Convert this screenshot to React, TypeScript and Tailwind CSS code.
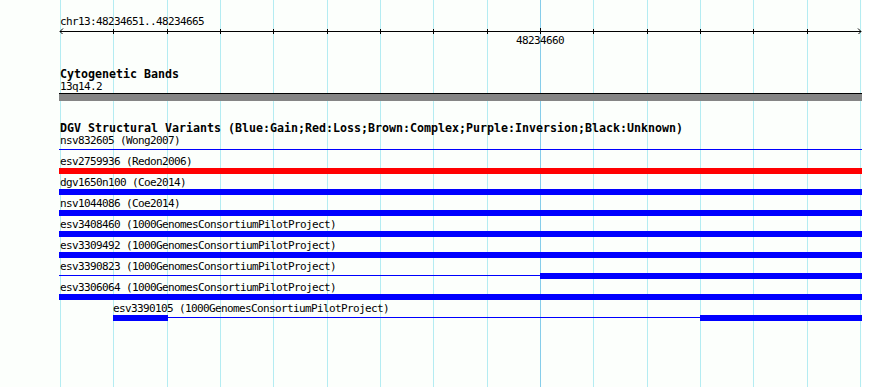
const gridX = Array.from({ length: 16 }, (_, i) => Math.round(60 + (i * 800) / 15));

type Segment = { kind: 'bar' | 'line'; cls: string };

const rows: { label: string; indent: string; color: string; segments: Segment[] }[] = [
    { label: 'nsv832605 (Wong2007)', indent: 'pl-px', color: 'bg-[#0000ff]', segments: [{ kind: 'line', cls: 'w-[803px]' }] },
    { label: 'esv2759936 (Redon2006)', indent: 'pl-px', color: 'bg-[#ff0000]', segments: [{ kind: 'bar', cls: 'w-[803px]' }] },
    { label: 'dgv1650n100 (Coe2014)', indent: 'pl-px', color: 'bg-[#0000ff]', segments: [{ kind: 'bar', cls: 'w-[803px]' }] },
    { label: 'nsv1044086 (Coe2014)', indent: 'pl-px', color: 'bg-[#0000ff]', segments: [{ kind: 'bar', cls: 'w-[803px]' }] },
    { label: 'esv3408460 (1000GenomesConsortiumPilotProject)', indent: 'pl-px', color: 'bg-[#0000ff]', segments: [{ kind: 'bar', cls: 'w-[803px]' }] },
    { label: 'esv3309492 (1000GenomesConsortiumPilotProject)', indent: 'pl-px', color: 'bg-[#0000ff]', segments: [{ kind: 'bar', cls: 'w-[803px]' }] },
    {
        label: 'esv3390823 (1000GenomesConsortiumPilotProject)',
        indent: 'pl-px',
        color: 'bg-[#0000ff]',
        segments: [
            { kind: 'line', cls: 'w-[481px]' },
            { kind: 'bar', cls: 'w-[322px]' },
        ],
    },
    { label: 'esv3306064 (1000GenomesConsortiumPilotProject)', indent: 'pl-px', color: 'bg-[#0000ff]', segments: [{ kind: 'bar', cls: 'w-[803px]' }] },
    {
        label: 'esv3390105 (1000GenomesConsortiumPilotProject)',
        indent: 'pl-[54px]',
        color: 'bg-[#0000ff]',
        segments: [
            { kind: 'bar', cls: 'w-[55px]' },
            { kind: 'line', cls: 'w-[532px]' },
            { kind: 'bar', cls: 'w-[162px]' },
        ],
    },
];

function Grid() {
    return (
        <svg className="absolute left-0 top-0 z-0" width="862" height="387" shapeRendering="crispEdges">
            {gridX.map((x) => (
                <line key={x} x1={x + 0.5} x2={x + 0.5} y1={0} y2={387} stroke={x === 540 ? '#86cdea' : '#b4ecf2'} strokeWidth={1} />
            ))}
        </svg>
    );
}

function Ruler() {
    return (
        <svg width="803" height="6" className="block" shapeRendering="crispEdges">
            <line x1={1} x2={802} y1={3.5} y2={3.5} stroke="#000" />
            {gridX.slice(1, -1).map((x) => (
                <line key={x} x1={x - 59 + 0.5} x2={x - 59 + 0.5} y1={x === 540 ? 0 : 1} y2={6} stroke="#000" />
            ))}
            <polyline points="4,0.5 1,3.5 4,6.5" fill="none" stroke="#000" shapeRendering="auto" />
            <polyline points="799,0.5 802,3.5 799,6.5" fill="none" stroke="#000" shapeRendering="auto" />
        </svg>
    );
}

export default function App() {
    return (
        <div className="relative h-[387px] w-[890px] overflow-hidden bg-white font-['DejaVu_Sans_Mono',monospace] text-black">
            <div className="absolute left-0 top-0 h-[387px] w-[862px] bg-[#fcfffc]" />
            <Grid />

            <div className="relative z-10 w-[862px] pl-[59px]">
                {/* Ruler */}
                <div className="pl-px pt-[15px] text-[11px] leading-[13px] tracking-[-0.62px]">chr13:48234651..48234665</div>
                <Ruler />
                <div className="pl-[457px] text-[11px] leading-[13px] tracking-[-0.62px]">48234660</div>

                {/* Cytogenetic Bands */}
                <div className="mt-[21px] pl-px text-[11.63px] font-bold leading-[12px]">Cytogenetic Bands</div>
                <div className="pl-px text-[11px] leading-[13px] tracking-[-0.62px]">13q14.2</div>
                <div className="h-[8px] w-[803px] border-t border-black bg-[#858585]" />

                {/* DGV track */}
                <div className="mt-[21px] pl-px text-[11.63px] font-bold leading-[12px] whitespace-nowrap">
                    DGV Structural Variants (Blue:Gain;Red:Loss;Brown:Complex;Purple:Inversion;Black:Unknown)
                </div>
                <div className="flex flex-col">
                    {rows.map((r) => (
                        <div key={r.label} className="flex flex-col">
                            <div className={`${r.indent} text-[11px] leading-[13px] tracking-[-0.62px] whitespace-nowrap`}>{r.label}</div>
                            <div className={`flex h-[8px] items-start ${r.indent === 'pl-px' ? '' : 'pl-[54px]'}`}>
                                {r.segments.map((s, i) =>
                                    s.kind === 'bar' ? (
                                        <div key={i} className={`${s.cls} h-[6px] ${r.color}`} />
                                    ) : (
                                        <div key={i} className={`${s.cls} mt-[2px] h-px ${r.color}`} />
                                    ),
                                )}
                            </div>
                        </div>
                    ))}
                </div>
            </div>
        </div>
    );
}
